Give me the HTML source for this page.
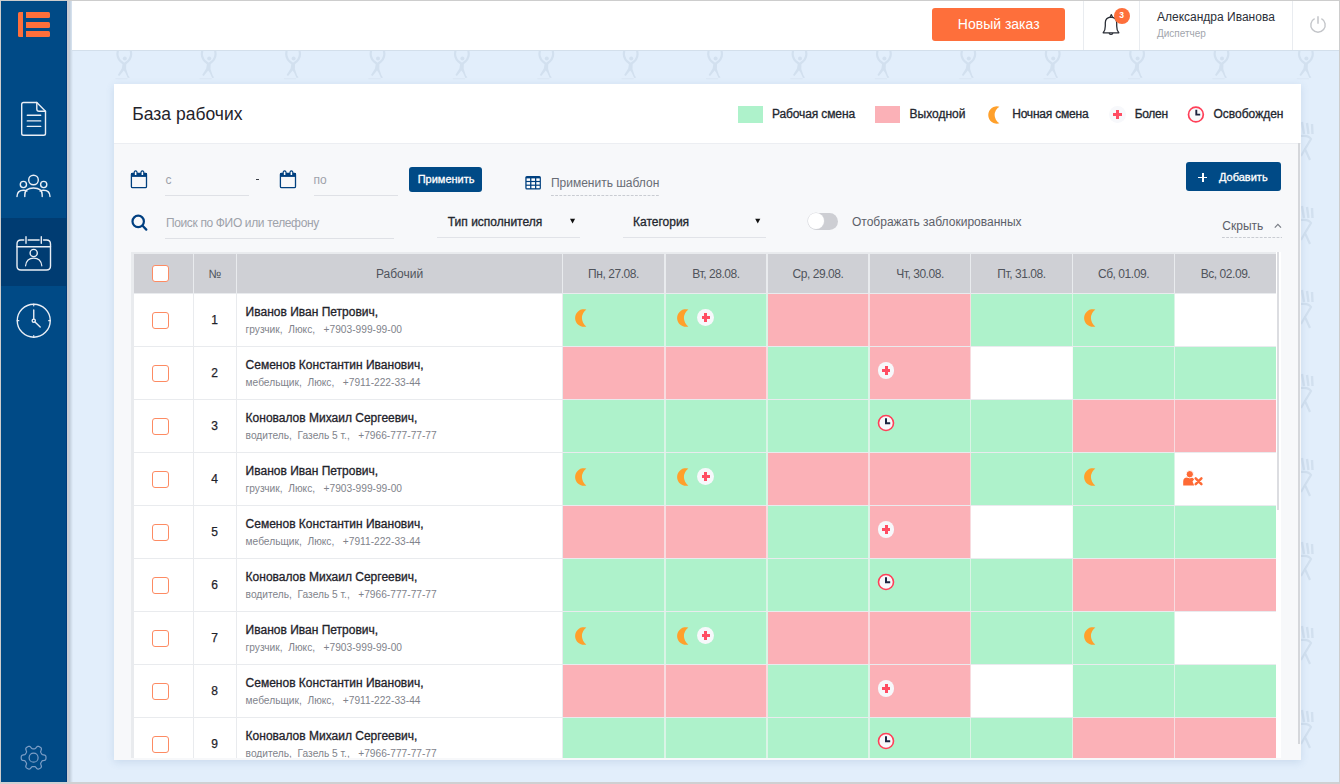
<!DOCTYPE html>
<html><head><meta charset="utf-8"><style>
*{margin:0;padding:0;box-sizing:border-box;}
html,body{width:1340px;height:784px;overflow:hidden;background:#e2eefb;font-family:"Liberation Sans", sans-serif;}
.a{position:absolute;}
.t{position:absolute;white-space:nowrap;line-height:1;}
.m{-webkit-text-stroke:0.3px currentColor;}
.m2{-webkit-text-stroke:0.25px currentColor;}
.cb{position:absolute;width:17px;height:17px;border:1.5px solid #fd8b63;border-radius:3px;background:#fff;}
</style></head>
<body>
<div class="a" style="left:0px;top:0px;width:67px;height:784px;background:#004a86;"></div>
<div class="a" style="left:66px;top:0px;width:1px;height:784px;background:#003b7a;"></div>
<div class="a" style="left:67px;top:0px;width:2px;height:784px;background:#c9ccd3;"></div>
<div class="a" style="left:69px;top:0px;width:4px;height:784px;background:linear-gradient(to right,#bcc8d5,#e2eefb);"></div>
<div class="a" style="left:17.5px;top:12px;width:5.5px;height:25px;background:#fe6f3b;border-radius:1.5px 0 0 1.5px"></div>
<div class="a" style="left:25.5px;top:12px;width:24.5px;height:6px;background:#fe6f3b;border-radius:0 1.5px 1.5px 0"></div>
<div class="a" style="left:25.5px;top:21.5px;width:24.5px;height:6px;background:#fe6f3b;border-radius:0 1.5px 1.5px 0"></div>
<div class="a" style="left:25.5px;top:31px;width:24.5px;height:6px;background:#fe6f3b;border-radius:0 1.5px 1.5px 0"></div>
<div class="a" style="left:1px;top:218px;width:66px;height:67.5px;background:#003c72;"></div>
<svg class="a" style="left:0;top:0" width="67" height="784" viewBox="0 0 67 784">
<g fill="none" stroke="#e9eef5" stroke-width="1.4" stroke-linecap="round" stroke-linejoin="round">
<path d="M23.5 102.5 H36.8 L45.5 111.2 V133.5 Q45.5 135.3 43.7 135.3 H23.5 Q21.7 135.3 21.7 133.5 V104.3 Q21.7 102.5 23.5 102.5 Z"/>
<path d="M36.8 102.5 V109 Q36.8 111.2 39 111.2 H45.5"/>
<path d="M27.3 115.3 H40.7 M27.3 120.9 H40.7 M27.3 126.4 H40.7"/>
<circle cx="33.5" cy="180" r="4.8"/>
<circle cx="23.4" cy="184.5" r="3.1"/>
<circle cx="43.7" cy="184.5" r="3.1"/>
<path d="M24.8 196.5 V195 Q24.8 188 33.5 188 Q42.2 188 42.2 195 V196.5"/>
<path d="M17 196.5 Q17 190.2 23.5 190.2 Q25.5 190.2 27 191"/>
<path d="M50 196.5 Q50 190.2 43.5 190.2 Q41.5 190.2 40 191"/>
<path d="M23.8 240 H21 Q17 240 17 244 V266 Q17 270 21 270 H46.5 Q50.5 270 50.5 266 V244 Q50.5 240 46.5 240 H43.5 M39.1 240 H28.2"/>
<path d="M17 246.7 H50.5"/>
<path d="M26 236.8 V243.2 M41.3 236.8 V243.2"/>
<circle cx="33.7" cy="253" r="3.6"/>
<path d="M25.6 265.8 Q26.5 258.2 33.7 258.2 Q40.9 258.2 41.8 265.8" stroke-width="1.2"/>
<circle cx="33.75" cy="320.7" r="16.5"/>
<path d="M33.75 310 V319 M35 322 L40.2 327"/>
<circle cx="33.75" cy="320.7" r="1.6"/>
<path d="M33.75 304.2 V305.8 M33.75 335.6 V337.2 M17.25 320.7 H18.8 M48.7 320.7 H50.25" stroke-width="1.2"/>
</g>
<g fill="none" stroke="#7c9ec6" stroke-width="1.2" stroke-linejoin="round">
<path d="M46.00 757.70 L45.99 758.02 L45.97 758.35 L45.94 758.67 L45.88 758.99 L45.79 759.30 L45.64 759.61 L45.41 759.89 L45.05 760.13 L44.53 760.32 L43.89 760.46 L43.24 760.56 L42.72 760.66 L42.35 760.80 L42.10 760.96 L41.92 761.15 L41.78 761.34 L41.66 761.54 L41.54 761.75 L41.42 761.95 L41.31 762.15 L41.19 762.35 L41.07 762.55 L40.96 762.76 L40.85 762.96 L40.75 763.18 L40.68 763.43 L40.66 763.73 L40.73 764.12 L40.89 764.62 L41.13 765.23 L41.34 765.86 L41.44 766.40 L41.40 766.84 L41.27 767.18 L41.08 767.45 L40.86 767.69 L40.61 767.90 L40.35 768.09 L40.08 768.27 L39.80 768.44 L39.52 768.60 L39.22 768.74 L38.93 768.87 L38.62 768.98 L38.30 769.05 L37.97 769.08 L37.61 769.03 L37.22 768.84 L36.79 768.48 L36.36 767.99 L35.95 767.48 L35.59 767.08 L35.29 766.83 L35.02 766.70 L34.78 766.63 L34.54 766.61 L34.30 766.60 L34.07 766.60 L33.83 766.60 L33.60 766.60 L33.37 766.60 L33.13 766.60 L32.90 766.60 L32.66 766.61 L32.42 766.63 L32.18 766.70 L31.91 766.83 L31.61 767.08 L31.25 767.48 L30.84 767.99 L30.41 768.48 L29.98 768.84 L29.59 769.03 L29.23 769.08 L28.90 769.05 L28.58 768.98 L28.27 768.87 L27.98 768.74 L27.68 768.60 L27.40 768.44 L27.12 768.27 L26.85 768.09 L26.59 767.90 L26.34 767.69 L26.12 767.45 L25.93 767.18 L25.80 766.84 L25.76 766.40 L25.86 765.86 L26.07 765.23 L26.31 764.62 L26.47 764.12 L26.54 763.73 L26.52 763.43 L26.45 763.18 L26.35 762.96 L26.24 762.76 L26.13 762.55 L26.01 762.35 L25.89 762.15 L25.78 761.95 L25.66 761.75 L25.54 761.54 L25.42 761.34 L25.28 761.15 L25.10 760.96 L24.85 760.80 L24.48 760.66 L23.96 760.56 L23.31 760.46 L22.67 760.32 L22.15 760.13 L21.79 759.89 L21.56 759.61 L21.41 759.30 L21.32 758.99 L21.26 758.67 L21.23 758.35 L21.21 758.02 L21.20 757.70 L21.21 757.38 L21.23 757.05 L21.26 756.73 L21.32 756.41 L21.41 756.10 L21.56 755.79 L21.79 755.51 L22.15 755.27 L22.67 755.08 L23.31 754.94 L23.96 754.84 L24.48 754.74 L24.85 754.60 L25.10 754.44 L25.28 754.25 L25.42 754.06 L25.54 753.86 L25.66 753.65 L25.78 753.45 L25.89 753.25 L26.01 753.05 L26.13 752.85 L26.24 752.64 L26.35 752.44 L26.45 752.22 L26.52 751.97 L26.54 751.67 L26.47 751.28 L26.31 750.78 L26.07 750.17 L25.86 749.54 L25.76 749.00 L25.80 748.56 L25.93 748.22 L26.12 747.95 L26.34 747.71 L26.59 747.50 L26.85 747.31 L27.12 747.13 L27.40 746.96 L27.68 746.80 L27.98 746.66 L28.27 746.53 L28.58 746.42 L28.90 746.35 L29.23 746.32 L29.59 746.37 L29.98 746.56 L30.41 746.92 L30.84 747.41 L31.25 747.92 L31.61 748.32 L31.91 748.57 L32.18 748.70 L32.42 748.77 L32.66 748.79 L32.90 748.80 L33.13 748.80 L33.37 748.80 L33.60 748.80 L33.83 748.80 L34.07 748.80 L34.30 748.80 L34.54 748.79 L34.78 748.77 L35.02 748.70 L35.29 748.57 L35.59 748.32 L35.95 747.92 L36.36 747.41 L36.79 746.92 L37.22 746.56 L37.61 746.37 L37.97 746.32 L38.30 746.35 L38.62 746.42 L38.93 746.53 L39.22 746.66 L39.52 746.80 L39.80 746.96 L40.08 747.13 L40.35 747.31 L40.61 747.50 L40.86 747.71 L41.08 747.95 L41.27 748.22 L41.40 748.56 L41.44 749.00 L41.34 749.54 L41.13 750.17 L40.89 750.78 L40.73 751.28 L40.66 751.67 L40.68 751.97 L40.75 752.22 L40.85 752.44 L40.96 752.64 L41.07 752.85 L41.19 753.05 L41.31 753.25 L41.42 753.45 L41.54 753.65 L41.66 753.86 L41.78 754.06 L41.92 754.25 L42.10 754.44 L42.35 754.60 L42.72 754.74 L43.24 754.84 L43.89 754.94 L44.53 755.08 L45.05 755.27 L45.41 755.51 L45.64 755.79 L45.79 756.10 L45.88 756.41 L45.94 756.73 L45.97 757.05 L45.99 757.38 Z"/>
<circle cx="33.6" cy="757.7" r="4.5"/>
</g>
</svg>
<svg class="a" style="left:0;top:0;filter:blur(0.5px)" width="1340" height="784" viewBox="0 0 1340 784"><g transform="translate(124.3,50)">
<path d="M-6.5 1 Q-8 7 -3.5 11.5 L-1.5 13 M6.5 1 Q8 7 3.5 11.5 L1.5 13" stroke="#d2e0ef" stroke-width="2.2" fill="none" stroke-linecap="round"/>
<path d="M-7 0.5 Q0 -1.5 7.5 0.5" stroke="#d2e0ef" stroke-width="1.6" fill="none"/>
<circle cx="0.5" cy="8.5" r="2" fill="#d2e0ef"/>
<path d="M-1.5 12.5 L2 12.5 L1.8 19 L4 25.5 L5.5 27.5 L3.5 28 L1 22.5 L-0.5 20.5 L-5 26 L-6.5 25 L-2.5 18.5 Z" fill="#d2e0ef"/>
<path d="M-9 28.7 H3" stroke="#d8e4f1" stroke-width="0.8"/>
</g><g transform="translate(208.7,50)">
<path d="M-6.5 1 Q-8 7 -3.5 11.5 L-1.5 13 M6.5 1 Q8 7 3.5 11.5 L1.5 13" stroke="#d2e0ef" stroke-width="2.2" fill="none" stroke-linecap="round"/>
<path d="M-7 0.5 Q0 -1.5 7.5 0.5" stroke="#d2e0ef" stroke-width="1.6" fill="none"/>
<circle cx="0.5" cy="8.5" r="2" fill="#d2e0ef"/>
<path d="M-1.5 12.5 L2 12.5 L1.8 19 L4 25.5 L5.5 27.5 L3.5 28 L1 22.5 L-0.5 20.5 L-5 26 L-6.5 25 L-2.5 18.5 Z" fill="#d2e0ef"/>
<path d="M-9 28.7 H3" stroke="#d8e4f1" stroke-width="0.8"/>
</g><g transform="translate(293.1,50)">
<path d="M-6.5 1 Q-8 7 -3.5 11.5 L-1.5 13 M6.5 1 Q8 7 3.5 11.5 L1.5 13" stroke="#d2e0ef" stroke-width="2.2" fill="none" stroke-linecap="round"/>
<path d="M-7 0.5 Q0 -1.5 7.5 0.5" stroke="#d2e0ef" stroke-width="1.6" fill="none"/>
<circle cx="0.5" cy="8.5" r="2" fill="#d2e0ef"/>
<path d="M-1.5 12.5 L2 12.5 L1.8 19 L4 25.5 L5.5 27.5 L3.5 28 L1 22.5 L-0.5 20.5 L-5 26 L-6.5 25 L-2.5 18.5 Z" fill="#d2e0ef"/>
<path d="M-9 28.7 H3" stroke="#d8e4f1" stroke-width="0.8"/>
</g><g transform="translate(377.5,50)">
<path d="M-6.5 1 Q-8 7 -3.5 11.5 L-1.5 13 M6.5 1 Q8 7 3.5 11.5 L1.5 13" stroke="#d2e0ef" stroke-width="2.2" fill="none" stroke-linecap="round"/>
<path d="M-7 0.5 Q0 -1.5 7.5 0.5" stroke="#d2e0ef" stroke-width="1.6" fill="none"/>
<circle cx="0.5" cy="8.5" r="2" fill="#d2e0ef"/>
<path d="M-1.5 12.5 L2 12.5 L1.8 19 L4 25.5 L5.5 27.5 L3.5 28 L1 22.5 L-0.5 20.5 L-5 26 L-6.5 25 L-2.5 18.5 Z" fill="#d2e0ef"/>
<path d="M-9 28.7 H3" stroke="#d8e4f1" stroke-width="0.8"/>
</g><g transform="translate(461.9,50)">
<path d="M-6.5 1 Q-8 7 -3.5 11.5 L-1.5 13 M6.5 1 Q8 7 3.5 11.5 L1.5 13" stroke="#d2e0ef" stroke-width="2.2" fill="none" stroke-linecap="round"/>
<path d="M-7 0.5 Q0 -1.5 7.5 0.5" stroke="#d2e0ef" stroke-width="1.6" fill="none"/>
<circle cx="0.5" cy="8.5" r="2" fill="#d2e0ef"/>
<path d="M-1.5 12.5 L2 12.5 L1.8 19 L4 25.5 L5.5 27.5 L3.5 28 L1 22.5 L-0.5 20.5 L-5 26 L-6.5 25 L-2.5 18.5 Z" fill="#d2e0ef"/>
<path d="M-9 28.7 H3" stroke="#d8e4f1" stroke-width="0.8"/>
</g><g transform="translate(546.3,50)">
<path d="M-6.5 1 Q-8 7 -3.5 11.5 L-1.5 13 M6.5 1 Q8 7 3.5 11.5 L1.5 13" stroke="#d2e0ef" stroke-width="2.2" fill="none" stroke-linecap="round"/>
<path d="M-7 0.5 Q0 -1.5 7.5 0.5" stroke="#d2e0ef" stroke-width="1.6" fill="none"/>
<circle cx="0.5" cy="8.5" r="2" fill="#d2e0ef"/>
<path d="M-1.5 12.5 L2 12.5 L1.8 19 L4 25.5 L5.5 27.5 L3.5 28 L1 22.5 L-0.5 20.5 L-5 26 L-6.5 25 L-2.5 18.5 Z" fill="#d2e0ef"/>
<path d="M-9 28.7 H3" stroke="#d8e4f1" stroke-width="0.8"/>
</g><g transform="translate(630.7,50)">
<path d="M-6.5 1 Q-8 7 -3.5 11.5 L-1.5 13 M6.5 1 Q8 7 3.5 11.5 L1.5 13" stroke="#d2e0ef" stroke-width="2.2" fill="none" stroke-linecap="round"/>
<path d="M-7 0.5 Q0 -1.5 7.5 0.5" stroke="#d2e0ef" stroke-width="1.6" fill="none"/>
<circle cx="0.5" cy="8.5" r="2" fill="#d2e0ef"/>
<path d="M-1.5 12.5 L2 12.5 L1.8 19 L4 25.5 L5.5 27.5 L3.5 28 L1 22.5 L-0.5 20.5 L-5 26 L-6.5 25 L-2.5 18.5 Z" fill="#d2e0ef"/>
<path d="M-9 28.7 H3" stroke="#d8e4f1" stroke-width="0.8"/>
</g><g transform="translate(715.1,50)">
<path d="M-6.5 1 Q-8 7 -3.5 11.5 L-1.5 13 M6.5 1 Q8 7 3.5 11.5 L1.5 13" stroke="#d2e0ef" stroke-width="2.2" fill="none" stroke-linecap="round"/>
<path d="M-7 0.5 Q0 -1.5 7.5 0.5" stroke="#d2e0ef" stroke-width="1.6" fill="none"/>
<circle cx="0.5" cy="8.5" r="2" fill="#d2e0ef"/>
<path d="M-1.5 12.5 L2 12.5 L1.8 19 L4 25.5 L5.5 27.5 L3.5 28 L1 22.5 L-0.5 20.5 L-5 26 L-6.5 25 L-2.5 18.5 Z" fill="#d2e0ef"/>
<path d="M-9 28.7 H3" stroke="#d8e4f1" stroke-width="0.8"/>
</g><g transform="translate(799.5,50)">
<path d="M-6.5 1 Q-8 7 -3.5 11.5 L-1.5 13 M6.5 1 Q8 7 3.5 11.5 L1.5 13" stroke="#d2e0ef" stroke-width="2.2" fill="none" stroke-linecap="round"/>
<path d="M-7 0.5 Q0 -1.5 7.5 0.5" stroke="#d2e0ef" stroke-width="1.6" fill="none"/>
<circle cx="0.5" cy="8.5" r="2" fill="#d2e0ef"/>
<path d="M-1.5 12.5 L2 12.5 L1.8 19 L4 25.5 L5.5 27.5 L3.5 28 L1 22.5 L-0.5 20.5 L-5 26 L-6.5 25 L-2.5 18.5 Z" fill="#d2e0ef"/>
<path d="M-9 28.7 H3" stroke="#d8e4f1" stroke-width="0.8"/>
</g><g transform="translate(883.9,50)">
<path d="M-6.5 1 Q-8 7 -3.5 11.5 L-1.5 13 M6.5 1 Q8 7 3.5 11.5 L1.5 13" stroke="#d2e0ef" stroke-width="2.2" fill="none" stroke-linecap="round"/>
<path d="M-7 0.5 Q0 -1.5 7.5 0.5" stroke="#d2e0ef" stroke-width="1.6" fill="none"/>
<circle cx="0.5" cy="8.5" r="2" fill="#d2e0ef"/>
<path d="M-1.5 12.5 L2 12.5 L1.8 19 L4 25.5 L5.5 27.5 L3.5 28 L1 22.5 L-0.5 20.5 L-5 26 L-6.5 25 L-2.5 18.5 Z" fill="#d2e0ef"/>
<path d="M-9 28.7 H3" stroke="#d8e4f1" stroke-width="0.8"/>
</g><g transform="translate(968.3,50)">
<path d="M-6.5 1 Q-8 7 -3.5 11.5 L-1.5 13 M6.5 1 Q8 7 3.5 11.5 L1.5 13" stroke="#d2e0ef" stroke-width="2.2" fill="none" stroke-linecap="round"/>
<path d="M-7 0.5 Q0 -1.5 7.5 0.5" stroke="#d2e0ef" stroke-width="1.6" fill="none"/>
<circle cx="0.5" cy="8.5" r="2" fill="#d2e0ef"/>
<path d="M-1.5 12.5 L2 12.5 L1.8 19 L4 25.5 L5.5 27.5 L3.5 28 L1 22.5 L-0.5 20.5 L-5 26 L-6.5 25 L-2.5 18.5 Z" fill="#d2e0ef"/>
<path d="M-9 28.7 H3" stroke="#d8e4f1" stroke-width="0.8"/>
</g><g transform="translate(1052.7,50)">
<path d="M-6.5 1 Q-8 7 -3.5 11.5 L-1.5 13 M6.5 1 Q8 7 3.5 11.5 L1.5 13" stroke="#d2e0ef" stroke-width="2.2" fill="none" stroke-linecap="round"/>
<path d="M-7 0.5 Q0 -1.5 7.5 0.5" stroke="#d2e0ef" stroke-width="1.6" fill="none"/>
<circle cx="0.5" cy="8.5" r="2" fill="#d2e0ef"/>
<path d="M-1.5 12.5 L2 12.5 L1.8 19 L4 25.5 L5.5 27.5 L3.5 28 L1 22.5 L-0.5 20.5 L-5 26 L-6.5 25 L-2.5 18.5 Z" fill="#d2e0ef"/>
<path d="M-9 28.7 H3" stroke="#d8e4f1" stroke-width="0.8"/>
</g><g transform="translate(1137.1,50)">
<path d="M-6.5 1 Q-8 7 -3.5 11.5 L-1.5 13 M6.5 1 Q8 7 3.5 11.5 L1.5 13" stroke="#d2e0ef" stroke-width="2.2" fill="none" stroke-linecap="round"/>
<path d="M-7 0.5 Q0 -1.5 7.5 0.5" stroke="#d2e0ef" stroke-width="1.6" fill="none"/>
<circle cx="0.5" cy="8.5" r="2" fill="#d2e0ef"/>
<path d="M-1.5 12.5 L2 12.5 L1.8 19 L4 25.5 L5.5 27.5 L3.5 28 L1 22.5 L-0.5 20.5 L-5 26 L-6.5 25 L-2.5 18.5 Z" fill="#d2e0ef"/>
<path d="M-9 28.7 H3" stroke="#d8e4f1" stroke-width="0.8"/>
</g><g transform="translate(1221.5,50)">
<path d="M-6.5 1 Q-8 7 -3.5 11.5 L-1.5 13 M6.5 1 Q8 7 3.5 11.5 L1.5 13" stroke="#d2e0ef" stroke-width="2.2" fill="none" stroke-linecap="round"/>
<path d="M-7 0.5 Q0 -1.5 7.5 0.5" stroke="#d2e0ef" stroke-width="1.6" fill="none"/>
<circle cx="0.5" cy="8.5" r="2" fill="#d2e0ef"/>
<path d="M-1.5 12.5 L2 12.5 L1.8 19 L4 25.5 L5.5 27.5 L3.5 28 L1 22.5 L-0.5 20.5 L-5 26 L-6.5 25 L-2.5 18.5 Z" fill="#d2e0ef"/>
<path d="M-9 28.7 H3" stroke="#d8e4f1" stroke-width="0.8"/>
</g><g transform="translate(1305.9,50)">
<path d="M-6.5 1 Q-8 7 -3.5 11.5 L-1.5 13 M6.5 1 Q8 7 3.5 11.5 L1.5 13" stroke="#d2e0ef" stroke-width="2.2" fill="none" stroke-linecap="round"/>
<path d="M-7 0.5 Q0 -1.5 7.5 0.5" stroke="#d2e0ef" stroke-width="1.6" fill="none"/>
<circle cx="0.5" cy="8.5" r="2" fill="#d2e0ef"/>
<path d="M-1.5 12.5 L2 12.5 L1.8 19 L4 25.5 L5.5 27.5 L3.5 28 L1 22.5 L-0.5 20.5 L-5 26 L-6.5 25 L-2.5 18.5 Z" fill="#d2e0ef"/>
<path d="M-9 28.7 H3" stroke="#d8e4f1" stroke-width="0.8"/>
</g><g transform="translate(1300,122)">
<path d="M2 0 L4 12 M7 1 L8.5 12 M12 2 L12.5 12" stroke="#d2e0ef" stroke-width="2.4" fill="none"/>
<path d="M1 14 Q9 13 11 17 L5 27 L10 38 M5 27 L1 34" stroke="#d2e0ef" stroke-width="2.2" fill="none"/>
</g><g transform="translate(1300,206)">
<path d="M2 0 L4 12 M7 1 L8.5 12 M12 2 L12.5 12" stroke="#d2e0ef" stroke-width="2.4" fill="none"/>
<path d="M1 14 Q9 13 11 17 L5 27 L10 38 M5 27 L1 34" stroke="#d2e0ef" stroke-width="2.2" fill="none"/>
</g><g transform="translate(1300,290)">
<path d="M2 0 L4 12 M7 1 L8.5 12 M12 2 L12.5 12" stroke="#d2e0ef" stroke-width="2.4" fill="none"/>
<path d="M1 14 Q9 13 11 17 L5 27 L10 38 M5 27 L1 34" stroke="#d2e0ef" stroke-width="2.2" fill="none"/>
</g><g transform="translate(1300,374)">
<path d="M2 0 L4 12 M7 1 L8.5 12 M12 2 L12.5 12" stroke="#d2e0ef" stroke-width="2.4" fill="none"/>
<path d="M1 14 Q9 13 11 17 L5 27 L10 38 M5 27 L1 34" stroke="#d2e0ef" stroke-width="2.2" fill="none"/>
</g><g transform="translate(1300,458)">
<path d="M2 0 L4 12 M7 1 L8.5 12 M12 2 L12.5 12" stroke="#d2e0ef" stroke-width="2.4" fill="none"/>
<path d="M1 14 Q9 13 11 17 L5 27 L10 38 M5 27 L1 34" stroke="#d2e0ef" stroke-width="2.2" fill="none"/>
</g><g transform="translate(1300,542)">
<path d="M2 0 L4 12 M7 1 L8.5 12 M12 2 L12.5 12" stroke="#d2e0ef" stroke-width="2.4" fill="none"/>
<path d="M1 14 Q9 13 11 17 L5 27 L10 38 M5 27 L1 34" stroke="#d2e0ef" stroke-width="2.2" fill="none"/>
</g><g transform="translate(1300,626)">
<path d="M2 0 L4 12 M7 1 L8.5 12 M12 2 L12.5 12" stroke="#d2e0ef" stroke-width="2.4" fill="none"/>
<path d="M1 14 Q9 13 11 17 L5 27 L10 38 M5 27 L1 34" stroke="#d2e0ef" stroke-width="2.2" fill="none"/>
</g><g transform="translate(1300,710)">
<path d="M2 0 L4 12 M7 1 L8.5 12 M12 2 L12.5 12" stroke="#d2e0ef" stroke-width="2.4" fill="none"/>
<path d="M1 14 Q9 13 11 17 L5 27 L10 38 M5 27 L1 34" stroke="#d2e0ef" stroke-width="2.2" fill="none"/>
</g></svg>
<div class="a" style="left:72px;top:0px;width:1268px;height:50px;background:#fff;"></div>
<div class="a" style="left:72px;top:49.5px;width:1268px;height:1.5px;background:#d3dfeb;"></div>
<div class="a" style="left:932px;top:8px;width:133px;height:33px;background:#fe6f3b;border-radius:3px"></div>
<div class="t " style="left:957.8px;top:17.45px;font-size:14px;color:#fff;font-weight:400;letter-spacing:0px;">Новый заказ</div>
<div class="a" style="left:1083px;top:0px;width:1px;height:50px;background:#e9ecf0;"></div>
<div class="a" style="left:1139px;top:0px;width:1px;height:50px;background:#e9ecf0;"></div>
<div class="a" style="left:1292px;top:0px;width:1px;height:50px;background:#e9ecf0;"></div>
<svg class="a" style="left:1095px;top:8px" width="30" height="30" viewBox="1095 8 30 30">
<path d="M1103.2 32.8 Q1105.3 30.6 1105.3 26 V22.8 Q1105.3 17.6 1111 17.2 Q1116.7 17.6 1116.7 22.8 V26 Q1116.7 30.6 1118.8 32.8 Z" fill="none" stroke="#2a2e36" stroke-width="1.3" stroke-linejoin="round"/>
<path d="M1109.9 17.4 L1111.3 14.6 L1112.7 17.4" fill="none" stroke="#2a2e36" stroke-width="1.2" stroke-linejoin="round"/>
<path d="M1109 33.2 Q1111 35.5 1113 33.2" fill="none" stroke="#2a2e36" stroke-width="1.3"/>
</svg>
<div class="a" style="left:1113.8px;top:7.9px;width:16.2px;height:16.2px;background:#fe6f3b;border-radius:50%"></div>
<div class="t " style="left:1111.6px;width:20px;text-align:center;top:11.40px;font-size:8.5px;color:#fff;font-weight:700;letter-spacing:0px;">3</div>
<div class="t " style="left:1157px;top:11.04px;font-size:12px;color:#2b2f38;font-weight:400;letter-spacing:0px;">Александра Иванова</div>
<div class="t " style="left:1157px;top:29.43px;font-size:10px;color:#a2a6ad;font-weight:400;letter-spacing:0px;">Диспетчер</div>
<svg class="a" style="left:1305px;top:10px" width="30" height="30" viewBox="1305 10 30 30">
<path d="M1314.6 18.65 A7.2 7.2 0 1 0 1321.4 18.65" fill="none" stroke="#c3c5c9" stroke-width="1.4"/>
<path d="M1318 16.2 V23.7" stroke="#c3c5c9" stroke-width="1.5"/>
</svg>
<div class="a" style="left:114px;top:84px;width:1187px;height:676px;background:#f7f8fa;box-shadow:0 2px 8px rgba(70,110,160,0.16)"></div>
<div class="a" style="left:114px;top:84px;width:1187px;height:59px;background:#fff;"></div>
<div class="a" style="left:114px;top:142.5px;width:1187px;height:1px;background:#eceef2;"></div>
<div class="t " style="left:132.3px;top:106.39px;font-size:17.5px;color:#1f232b;font-weight:400;letter-spacing:0px;">База рабочих</div>
<div class="a" style="left:738px;top:106px;width:25px;height:17px;background:#aef2cb;"></div>
<div class="t m" style="left:772px;top:107.74px;font-size:12px;color:#23272f;font-weight:400;letter-spacing:-0.12px;">Рабочая смена</div>
<div class="a" style="left:875px;top:106px;width:25px;height:17px;background:#fbb1b7;"></div>
<div class="t m" style="left:909.5px;top:107.74px;font-size:12px;color:#23272f;font-weight:400;letter-spacing:0px;">Выходной</div>
<div class="t m" style="left:1012.2px;top:107.74px;font-size:12px;color:#23272f;font-weight:400;letter-spacing:-0.2px;">Ночная смена</div>
<div class="t m" style="left:1134.7px;top:107.74px;font-size:12px;color:#23272f;font-weight:400;letter-spacing:-0.3px;">Болен</div>
<div class="t m" style="left:1213.5px;top:107.74px;font-size:12px;color:#23272f;font-weight:400;letter-spacing:0px;">Освобожден</div>
<svg class="a" style="left:129.3px;top:168px" width="20" height="22" viewBox="129.3 168 20 22">
<path d="M132.5 173.3 H146.0 Q146.8 173.3 146.8 174.5 V186.5 Q146.8 187.7 145.60000000000002 187.7 H132.9 Q131.70000000000002 187.7 131.70000000000002 186.5 V174.5 Q131.70000000000002 173.3 132.5 173.3 Z" fill="none" stroke="#00407f" stroke-width="1.3"/>
<rect x="131.3" y="173" width="16" height="3.9" fill="#00407f"/>
<path d="M134.5 175 V172 Q135.9 169.8 137.3 172 V175 M141.3 175 V172 Q142.70000000000002 169.8 144.10000000000002 172 V175" fill="#fff" stroke="#00407f" stroke-width="1.2"/>
</svg>
<svg class="a" style="left:277.5px;top:168px" width="20" height="22" viewBox="277.5 168 20 22">
<path d="M280.7 173.3 H294.2 Q295.0 173.3 295.0 174.5 V186.5 Q295.0 187.7 293.8 187.7 H281.1 Q279.9 187.7 279.9 186.5 V174.5 Q279.9 173.3 280.7 173.3 Z" fill="none" stroke="#00407f" stroke-width="1.3"/>
<rect x="279.5" y="173" width="16" height="3.9" fill="#00407f"/>
<path d="M282.7 175 V172 Q284.1 169.8 285.5 172 V175 M289.5 175 V172 Q290.9 169.8 292.3 172 V175" fill="#fff" stroke="#00407f" stroke-width="1.2"/>
</svg>
<div class="t " style="left:165.4px;top:173.54px;font-size:12px;color:#9ea2aa;font-weight:400;letter-spacing:0px;">с</div>
<div class="a" style="left:165px;top:195px;width:84px;height:1px;background:#dfe1e6;"></div>
<div class="a" style="left:256px;top:179px;width:3px;height:1.3px;background:#3a3e46;"></div>
<div class="t " style="left:313.5px;top:173.54px;font-size:12px;color:#9ea2aa;font-weight:400;letter-spacing:0px;">по</div>
<div class="a" style="left:313.5px;top:194.5px;width:84px;height:1px;background:#dfe1e6;"></div>
<div class="a" style="left:408.8px;top:167px;width:73.6px;height:25px;background:#004a86;border-radius:3px"></div>
<div class="t m" style="left:417.7px;top:174.29px;font-size:11px;color:#fff;font-weight:400;letter-spacing:0px;">Применить</div>
<svg class="a" style="left:523px;top:174px" width="20" height="18" viewBox="523 174 20 18"><rect x="525.3" y="176" width="15.6" height="13.6" rx="1.5" fill="#00407f"/><rect x="526.6" y="178.4" width="3.5" height="2.5" fill="#fff"/><rect x="526.6" y="182.1" width="3.5" height="2.5" fill="#fff"/><rect x="526.6" y="185.8" width="3.5" height="2.4" fill="#fff"/><rect x="531.4" y="178.4" width="3.6" height="2.5" fill="#fff"/><rect x="531.4" y="182.1" width="3.6" height="2.5" fill="#fff"/><rect x="531.4" y="185.8" width="3.6" height="2.4" fill="#fff"/><rect x="536.3" y="178.4" width="3.4" height="2.5" fill="#fff"/><rect x="536.3" y="182.1" width="3.4" height="2.5" fill="#fff"/><rect x="536.3" y="185.8" width="3.4" height="2.4" fill="#fff"/></svg>
<div class="t " style="left:550.9px;top:177.14px;font-size:12px;color:#686c75;font-weight:400;letter-spacing:0px;">Применить шаблон</div>
<svg class="a" style="left:551px;top:195px" width="108" height="1" viewBox="551 195 108 1"><line x1="551" y1="195.5" x2="659" y2="195.5" stroke="#c9ccd2" stroke-width="1" stroke-dasharray="2.8 1.4"/></svg>
<div class="a" style="left:1186px;top:162px;width:95px;height:29px;background:#004a86;border-radius:3px"></div>
<div class="a" style="left:1198.3px;top:176.5px;width:9px;height:1.8px;background:#fff;"></div>
<div class="a" style="left:1201.9px;top:172.8px;width:1.8px;height:9px;background:#fff;"></div>
<div class="t m" style="left:1219px;top:171.69px;font-size:11px;color:#fff;font-weight:400;letter-spacing:0px;">Добавить</div>
<svg class="a" style="left:128px;top:211px" width="22" height="22" viewBox="128 211 22 22">
<circle cx="138.2" cy="221.4" r="5.7" fill="none" stroke="#003f80" stroke-width="2.2"/>
<path d="M142.6 225.8 L146.3 229.6" stroke="#003f80" stroke-width="2.3" stroke-linecap="round"/>
</svg>
<div class="t " style="left:165.9px;top:217.14px;font-size:12px;color:#9ea2aa;font-weight:400;letter-spacing:-0.35px;">Поиск по ФИО или телефону</div>
<div class="a" style="left:165px;top:237.5px;width:229px;height:1px;background:#dfe1e6;"></div>
<div class="t m" style="left:447.8px;top:216.34px;font-size:12px;color:#23272f;font-weight:400;letter-spacing:0px;">Тип исполнителя</div>
<svg class="a" style="left:569px;top:218px" width="7" height="6" viewBox="569 218 7 6"><path d="M570 218.8 H575.1 L572.55 223.4 Z" fill="#111"/></svg>
<div class="a" style="left:437.3px;top:237px;width:143px;height:1px;background:#e1e3e8;"></div>
<div class="t m" style="left:633px;top:216.34px;font-size:12px;color:#23272f;font-weight:400;letter-spacing:0px;">Категория</div>
<svg class="a" style="left:754px;top:218px" width="7" height="6" viewBox="754 218 7 6"><path d="M755.2 218.8 H760.3 L757.75 223.4 Z" fill="#111"/></svg>
<div class="a" style="left:622.7px;top:237px;width:143px;height:1px;background:#e1e3e8;"></div>
<div class="a" style="left:807.6px;top:213px;width:30.1px;height:16.8px;background:#cdced3;border-radius:9px"></div>
<div class="a" style="left:807.6px;top:213.4px;width:16px;height:16px;background:#fff;border-radius:50%;box-shadow:0 0 0 0.6px #d6d7dc"></div>
<div class="t " style="left:852px;top:215.84px;font-size:12px;color:#5c6069;font-weight:400;letter-spacing:0px;">Отображать заблокированных</div>
<div class="t " style="left:1222.3px;top:219.84px;font-size:12px;color:#5c6069;font-weight:400;letter-spacing:0px;">Скрыть</div>
<svg class="a" style="left:1272px;top:221px" width="11" height="8" viewBox="1272 221 11 8"><path d="M1274.8 227.6 L1277.9 224.3 L1281 227.6" fill="none" stroke="#7a7e86" stroke-width="1.2"/></svg>
<svg class="a" style="left:1222px;top:237px" width="60" height="1" viewBox="1222 237 60 1"><line x1="1222" y1="237.5" x2="1282" y2="237.5" stroke="#c9ccd2" stroke-width="1" stroke-dasharray="2.8 1.4"/></svg>
<div class="a" style="left:131px;top:252px;width:1149px;height:506px;background:#e9ebee;"></div>
<div class="a" style="left:1276px;top:252px;width:5px;height:506px;background:#fff;"></div>
<div class="a" style="left:1276.5px;top:252px;width:2.6px;height:257.5px;background:#dcdde1;"></div>
<div class="a" style="left:134px;top:254px;width:59px;height:39px;background:#cfd0d5;"></div>
<div class="a" style="left:194px;top:254px;width:42px;height:39px;background:#cfd0d5;"></div>
<div class="a" style="left:237px;top:254px;width:325px;height:39px;background:#cfd0d5;"></div>
<div class="a" style="left:563px;top:254px;width:101px;height:39px;background:#cfd0d5;"></div>
<div class="a" style="left:666px;top:254px;width:100px;height:39px;background:#cfd0d5;"></div>
<div class="a" style="left:768px;top:254px;width:100px;height:39px;background:#cfd0d5;"></div>
<div class="a" style="left:870px;top:254px;width:100px;height:39px;background:#cfd0d5;"></div>
<div class="a" style="left:971px;top:254px;width:101px;height:39px;background:#cfd0d5;"></div>
<div class="a" style="left:1073px;top:254px;width:101px;height:39px;background:#cfd0d5;"></div>
<div class="a" style="left:1175px;top:254px;width:101px;height:39px;background:#cfd0d5;"></div>
<div class="cb" style="left:152.3px;top:265px"></div>
<div class="t " style="left:194.9px;width:40px;text-align:center;top:267.64px;font-size:12px;color:#50545c;font-weight:400;letter-spacing:0px;">№</div>
<div class="t " style="left:299.5px;width:200px;text-align:center;top:267.64px;font-size:12px;color:#50545c;font-weight:400;letter-spacing:0px;">Рабочий</div>
<div class="t " style="left:563.5px;width:100px;text-align:center;top:267.64px;font-size:12px;color:#50545c;font-weight:400;letter-spacing:-0.45px;">Пн, 27.08.</div>
<div class="t " style="left:666.0px;width:100px;text-align:center;top:267.64px;font-size:12px;color:#50545c;font-weight:400;letter-spacing:-0.45px;">Вт, 28.08.</div>
<div class="t " style="left:768.0px;width:100px;text-align:center;top:267.64px;font-size:12px;color:#50545c;font-weight:400;letter-spacing:-0.45px;">Ср, 29.08.</div>
<div class="t " style="left:870.0px;width:100px;text-align:center;top:267.64px;font-size:12px;color:#50545c;font-weight:400;letter-spacing:-0.45px;">Чт, 30.08.</div>
<div class="t " style="left:971.5px;width:100px;text-align:center;top:267.64px;font-size:12px;color:#50545c;font-weight:400;letter-spacing:-0.45px;">Пт, 31.08.</div>
<div class="t " style="left:1073.5px;width:100px;text-align:center;top:267.64px;font-size:12px;color:#50545c;font-weight:400;letter-spacing:-0.45px;">Сб, 01.09.</div>
<div class="t " style="left:1175.5px;width:100px;text-align:center;top:267.64px;font-size:12px;color:#50545c;font-weight:400;letter-spacing:-0.45px;">Вс, 02.09.</div>
<div class="a" style="left:134px;top:294px;width:59px;height:52px;background:#fff;"></div>
<div class="a" style="left:194px;top:294px;width:42px;height:52px;background:#fff;"></div>
<div class="a" style="left:237px;top:294px;width:325px;height:52px;background:#fff;"></div>
<div class="a" style="left:563px;top:294px;width:103px;height:52px;background:#aef2cb;"></div>
<div class="a" style="left:664px;top:294px;width:2px;height:52px;background:rgba(245,245,247,0.62);"></div>
<div class="a" style="left:666px;top:294px;width:102px;height:52px;background:#aef2cb;"></div>
<div class="a" style="left:766px;top:294px;width:2px;height:52px;background:rgba(245,245,247,0.62);"></div>
<div class="a" style="left:768px;top:294px;width:102px;height:52px;background:#fbb1b7;"></div>
<div class="a" style="left:868px;top:294px;width:2px;height:52px;background:rgba(245,245,247,0.62);"></div>
<div class="a" style="left:870px;top:294px;width:101px;height:52px;background:#fbb1b7;"></div>
<div class="a" style="left:970px;top:294px;width:1px;height:52px;background:rgba(245,245,247,0.62);"></div>
<div class="a" style="left:971px;top:294px;width:102px;height:52px;background:#aef2cb;"></div>
<div class="a" style="left:1072px;top:294px;width:1px;height:52px;background:rgba(245,245,247,0.62);"></div>
<div class="a" style="left:1073px;top:294px;width:102px;height:52px;background:#aef2cb;"></div>
<div class="a" style="left:1174px;top:294px;width:1px;height:52px;background:rgba(245,245,247,0.62);"></div>
<div class="a" style="left:1175px;top:294px;width:101px;height:52px;background:#fff;"></div>
<div class="cb" style="left:152.3px;top:312px"></div>
<div class="t m2" style="left:199.5px;width:30px;text-align:center;top:314.44px;font-size:12px;color:#1f232b;font-weight:400;letter-spacing:0px;">1</div>
<div class="t m" style="left:245.6px;top:305.64px;font-size:12px;color:#1f232b;font-weight:400;letter-spacing:0px;">Иванов Иван Петрович,</div>
<div class="t " style="left:245.6px;top:324.77px;font-size:10.2px;color:#7f838b;font-weight:400;letter-spacing:0px;">грузчик,&nbsp; Люкс,&nbsp;&nbsp; +7903-999-99-00</div>
<svg class="a" style="left:572.6999999999999px;top:306.9px" width="22" height="22" viewBox="572.6999999999999 306.9 22 22"><path d="M586.05 309.45 A8.8 8.8 0 1 0 586.05 326.34999999999997 A10.3 10.3 0 0 1 586.05 309.45 Z" fill="#ffa02b"/></svg>
<svg class="a" style="left:674.8px;top:306.9px" width="22" height="22" viewBox="674.8 306.9 22 22"><path d="M688.15 309.45 A8.8 8.8 0 1 0 688.15 326.34999999999997 A10.3 10.3 0 0 1 688.15 309.45 Z" fill="#ffa02b"/></svg>
<div class="a" style="left:697.3px;top:309.0px;width:16.8px;height:16.8px;background:#f7f8fb;border-radius:50%"></div>
<div class="a" style="left:701.5999999999999px;top:315.79999999999995px;width:8.3px;height:3.2px;background:#ff4d63;"></div>
<div class="a" style="left:704.15px;top:312.9px;width:3.1px;height:9px;background:#ff4d63;"></div>
<svg class="a" style="left:1082.2px;top:306.9px" width="22" height="22" viewBox="1082.2 306.9 22 22"><path d="M1095.55 309.45 A8.8 8.8 0 1 0 1095.55 326.34999999999997 A10.3 10.3 0 0 1 1095.55 309.45 Z" fill="#ffa02b"/></svg>
<div class="a" style="left:134px;top:347px;width:59px;height:52px;background:#fff;"></div>
<div class="a" style="left:194px;top:347px;width:42px;height:52px;background:#fff;"></div>
<div class="a" style="left:237px;top:347px;width:325px;height:52px;background:#fff;"></div>
<div class="a" style="left:563px;top:347px;width:103px;height:52px;background:#fbb1b7;"></div>
<div class="a" style="left:664px;top:347px;width:2px;height:52px;background:rgba(245,245,247,0.62);"></div>
<div class="a" style="left:666px;top:347px;width:102px;height:52px;background:#fbb1b7;"></div>
<div class="a" style="left:766px;top:347px;width:2px;height:52px;background:rgba(245,245,247,0.62);"></div>
<div class="a" style="left:768px;top:347px;width:102px;height:52px;background:#aef2cb;"></div>
<div class="a" style="left:868px;top:347px;width:2px;height:52px;background:rgba(245,245,247,0.62);"></div>
<div class="a" style="left:870px;top:347px;width:101px;height:52px;background:#fbb1b7;"></div>
<div class="a" style="left:970px;top:347px;width:1px;height:52px;background:rgba(245,245,247,0.62);"></div>
<div class="a" style="left:971px;top:347px;width:102px;height:52px;background:#fff;"></div>
<div class="a" style="left:1072px;top:347px;width:1px;height:52px;background:rgba(245,245,247,0.62);"></div>
<div class="a" style="left:1073px;top:347px;width:102px;height:52px;background:#aef2cb;"></div>
<div class="a" style="left:1174px;top:347px;width:1px;height:52px;background:rgba(245,245,247,0.62);"></div>
<div class="a" style="left:1175px;top:347px;width:101px;height:52px;background:#aef2cb;"></div>
<div class="cb" style="left:152.3px;top:365px"></div>
<div class="t m2" style="left:199.5px;width:30px;text-align:center;top:367.44px;font-size:12px;color:#1f232b;font-weight:400;letter-spacing:0px;">2</div>
<div class="t m" style="left:245.6px;top:358.64px;font-size:12px;color:#1f232b;font-weight:400;letter-spacing:0px;">Семенов Константин Иванович,</div>
<div class="t " style="left:245.6px;top:377.77px;font-size:10.2px;color:#7f838b;font-weight:400;letter-spacing:0px;">мебельщик,&nbsp; Люкс,&nbsp;&nbsp; +7911-222-33-44</div>
<div class="a" style="left:877.7px;top:362.0px;width:16.8px;height:16.8px;background:#f7f8fb;border-radius:50%"></div>
<div class="a" style="left:882.0px;top:368.79999999999995px;width:8.3px;height:3.2px;background:#ff4d63;"></div>
<div class="a" style="left:884.5500000000001px;top:365.9px;width:3.1px;height:9px;background:#ff4d63;"></div>
<div class="a" style="left:134px;top:400px;width:59px;height:52px;background:#fff;"></div>
<div class="a" style="left:194px;top:400px;width:42px;height:52px;background:#fff;"></div>
<div class="a" style="left:237px;top:400px;width:325px;height:52px;background:#fff;"></div>
<div class="a" style="left:563px;top:400px;width:103px;height:52px;background:#aef2cb;"></div>
<div class="a" style="left:664px;top:400px;width:2px;height:52px;background:rgba(245,245,247,0.62);"></div>
<div class="a" style="left:666px;top:400px;width:102px;height:52px;background:#aef2cb;"></div>
<div class="a" style="left:766px;top:400px;width:2px;height:52px;background:rgba(245,245,247,0.62);"></div>
<div class="a" style="left:768px;top:400px;width:102px;height:52px;background:#aef2cb;"></div>
<div class="a" style="left:868px;top:400px;width:2px;height:52px;background:rgba(245,245,247,0.62);"></div>
<div class="a" style="left:870px;top:400px;width:101px;height:52px;background:#aef2cb;"></div>
<div class="a" style="left:970px;top:400px;width:1px;height:52px;background:rgba(245,245,247,0.62);"></div>
<div class="a" style="left:971px;top:400px;width:102px;height:52px;background:#aef2cb;"></div>
<div class="a" style="left:1072px;top:400px;width:1px;height:52px;background:rgba(245,245,247,0.62);"></div>
<div class="a" style="left:1073px;top:400px;width:102px;height:52px;background:#fbb1b7;"></div>
<div class="a" style="left:1174px;top:400px;width:1px;height:52px;background:rgba(245,245,247,0.62);"></div>
<div class="a" style="left:1175px;top:400px;width:101px;height:52px;background:#fbb1b7;"></div>
<div class="cb" style="left:152.3px;top:418px"></div>
<div class="t m2" style="left:199.5px;width:30px;text-align:center;top:420.44px;font-size:12px;color:#1f232b;font-weight:400;letter-spacing:0px;">3</div>
<div class="t m" style="left:245.6px;top:411.64px;font-size:12px;color:#1f232b;font-weight:400;letter-spacing:0px;">Коновалов Михаил Сергеевич,</div>
<div class="t " style="left:245.6px;top:430.77px;font-size:10.2px;color:#7f838b;font-weight:400;letter-spacing:0px;">водитель,&nbsp; Газель 5 т.,&nbsp;&nbsp; +7966-777-77-77</div>
<svg class="a" style="left:876.0px;top:413.4px" width="20" height="20" viewBox="876.0 413.4 20 20"><circle cx="886.0" cy="423.4" r="7.5" fill="#f7f8fb" stroke="#ff3f58" stroke-width="1.6"/><path d="M886.0 418.59999999999997 V423.7 H890.2" fill="none" stroke="#1d2440" stroke-width="2"/></svg>
<div class="a" style="left:134px;top:453px;width:59px;height:52px;background:#fff;"></div>
<div class="a" style="left:194px;top:453px;width:42px;height:52px;background:#fff;"></div>
<div class="a" style="left:237px;top:453px;width:325px;height:52px;background:#fff;"></div>
<div class="a" style="left:563px;top:453px;width:103px;height:52px;background:#aef2cb;"></div>
<div class="a" style="left:664px;top:453px;width:2px;height:52px;background:rgba(245,245,247,0.62);"></div>
<div class="a" style="left:666px;top:453px;width:102px;height:52px;background:#aef2cb;"></div>
<div class="a" style="left:766px;top:453px;width:2px;height:52px;background:rgba(245,245,247,0.62);"></div>
<div class="a" style="left:768px;top:453px;width:102px;height:52px;background:#fbb1b7;"></div>
<div class="a" style="left:868px;top:453px;width:2px;height:52px;background:rgba(245,245,247,0.62);"></div>
<div class="a" style="left:870px;top:453px;width:101px;height:52px;background:#fbb1b7;"></div>
<div class="a" style="left:970px;top:453px;width:1px;height:52px;background:rgba(245,245,247,0.62);"></div>
<div class="a" style="left:971px;top:453px;width:102px;height:52px;background:#aef2cb;"></div>
<div class="a" style="left:1072px;top:453px;width:1px;height:52px;background:rgba(245,245,247,0.62);"></div>
<div class="a" style="left:1073px;top:453px;width:102px;height:52px;background:#aef2cb;"></div>
<div class="a" style="left:1174px;top:453px;width:1px;height:52px;background:rgba(245,245,247,0.62);"></div>
<div class="a" style="left:1175px;top:453px;width:101px;height:52px;background:#fff;"></div>
<div class="cb" style="left:152.3px;top:471px"></div>
<div class="t m2" style="left:199.5px;width:30px;text-align:center;top:473.44px;font-size:12px;color:#1f232b;font-weight:400;letter-spacing:0px;">4</div>
<div class="t m" style="left:245.6px;top:464.64px;font-size:12px;color:#1f232b;font-weight:400;letter-spacing:0px;">Иванов Иван Петрович,</div>
<div class="t " style="left:245.6px;top:483.77px;font-size:10.2px;color:#7f838b;font-weight:400;letter-spacing:0px;">грузчик,&nbsp; Люкс,&nbsp;&nbsp; +7903-999-99-00</div>
<svg class="a" style="left:572.6999999999999px;top:465.9px" width="22" height="22" viewBox="572.6999999999999 465.9 22 22"><path d="M586.05 468.45 A8.8 8.8 0 1 0 586.05 485.34999999999997 A10.3 10.3 0 0 1 586.05 468.45 Z" fill="#ffa02b"/></svg>
<svg class="a" style="left:674.8px;top:465.9px" width="22" height="22" viewBox="674.8 465.9 22 22"><path d="M688.15 468.45 A8.8 8.8 0 1 0 688.15 485.34999999999997 A10.3 10.3 0 0 1 688.15 468.45 Z" fill="#ffa02b"/></svg>
<div class="a" style="left:697.3px;top:468.0px;width:16.8px;height:16.8px;background:#f7f8fb;border-radius:50%"></div>
<div class="a" style="left:701.5999999999999px;top:474.79999999999995px;width:8.3px;height:3.2px;background:#ff4d63;"></div>
<div class="a" style="left:704.15px;top:471.9px;width:3.1px;height:9px;background:#ff4d63;"></div>
<svg class="a" style="left:1082.2px;top:465.9px" width="22" height="22" viewBox="1082.2 465.9 22 22"><path d="M1095.55 468.45 A8.8 8.8 0 1 0 1095.55 485.34999999999997 A10.3 10.3 0 0 1 1095.55 468.45 Z" fill="#ffa02b"/></svg>
<svg class="a" style="left:1180px;top:468px" width="26" height="20" viewBox="1180 468 26 20">
<path d="M1183.2 485.4 V481.6 Q1183.2 477.5 1187.2 477.5 H1190.8 Q1193 477.5 1194.2 479.2 L1192.5 481.4 L1194.2 485.4 Z" fill="#fe6a35"/>
<circle cx="1189.8" cy="474.2" r="3.7" fill="#fe6a35" stroke="#fff" stroke-width="1"/>
<path d="M1195.7 478.4 L1201.4 484.1 M1201.4 478.4 L1195.7 484.1" stroke="#fe6a35" stroke-width="2.5" stroke-linecap="round"/>
</svg>
<div class="a" style="left:134px;top:506px;width:59px;height:52px;background:#fff;"></div>
<div class="a" style="left:194px;top:506px;width:42px;height:52px;background:#fff;"></div>
<div class="a" style="left:237px;top:506px;width:325px;height:52px;background:#fff;"></div>
<div class="a" style="left:563px;top:506px;width:103px;height:52px;background:#fbb1b7;"></div>
<div class="a" style="left:664px;top:506px;width:2px;height:52px;background:rgba(245,245,247,0.62);"></div>
<div class="a" style="left:666px;top:506px;width:102px;height:52px;background:#fbb1b7;"></div>
<div class="a" style="left:766px;top:506px;width:2px;height:52px;background:rgba(245,245,247,0.62);"></div>
<div class="a" style="left:768px;top:506px;width:102px;height:52px;background:#aef2cb;"></div>
<div class="a" style="left:868px;top:506px;width:2px;height:52px;background:rgba(245,245,247,0.62);"></div>
<div class="a" style="left:870px;top:506px;width:101px;height:52px;background:#fbb1b7;"></div>
<div class="a" style="left:970px;top:506px;width:1px;height:52px;background:rgba(245,245,247,0.62);"></div>
<div class="a" style="left:971px;top:506px;width:102px;height:52px;background:#fff;"></div>
<div class="a" style="left:1072px;top:506px;width:1px;height:52px;background:rgba(245,245,247,0.62);"></div>
<div class="a" style="left:1073px;top:506px;width:102px;height:52px;background:#aef2cb;"></div>
<div class="a" style="left:1174px;top:506px;width:1px;height:52px;background:rgba(245,245,247,0.62);"></div>
<div class="a" style="left:1175px;top:506px;width:101px;height:52px;background:#aef2cb;"></div>
<div class="cb" style="left:152.3px;top:524px"></div>
<div class="t m2" style="left:199.5px;width:30px;text-align:center;top:526.44px;font-size:12px;color:#1f232b;font-weight:400;letter-spacing:0px;">5</div>
<div class="t m" style="left:245.6px;top:517.64px;font-size:12px;color:#1f232b;font-weight:400;letter-spacing:0px;">Семенов Константин Иванович,</div>
<div class="t " style="left:245.6px;top:536.77px;font-size:10.2px;color:#7f838b;font-weight:400;letter-spacing:0px;">мебельщик,&nbsp; Люкс,&nbsp;&nbsp; +7911-222-33-44</div>
<div class="a" style="left:877.7px;top:521.0px;width:16.8px;height:16.8px;background:#f7f8fb;border-radius:50%"></div>
<div class="a" style="left:882.0px;top:527.8px;width:8.3px;height:3.2px;background:#ff4d63;"></div>
<div class="a" style="left:884.5500000000001px;top:524.9px;width:3.1px;height:9px;background:#ff4d63;"></div>
<div class="a" style="left:134px;top:559px;width:59px;height:52px;background:#fff;"></div>
<div class="a" style="left:194px;top:559px;width:42px;height:52px;background:#fff;"></div>
<div class="a" style="left:237px;top:559px;width:325px;height:52px;background:#fff;"></div>
<div class="a" style="left:563px;top:559px;width:103px;height:52px;background:#aef2cb;"></div>
<div class="a" style="left:664px;top:559px;width:2px;height:52px;background:rgba(245,245,247,0.62);"></div>
<div class="a" style="left:666px;top:559px;width:102px;height:52px;background:#aef2cb;"></div>
<div class="a" style="left:766px;top:559px;width:2px;height:52px;background:rgba(245,245,247,0.62);"></div>
<div class="a" style="left:768px;top:559px;width:102px;height:52px;background:#aef2cb;"></div>
<div class="a" style="left:868px;top:559px;width:2px;height:52px;background:rgba(245,245,247,0.62);"></div>
<div class="a" style="left:870px;top:559px;width:101px;height:52px;background:#aef2cb;"></div>
<div class="a" style="left:970px;top:559px;width:1px;height:52px;background:rgba(245,245,247,0.62);"></div>
<div class="a" style="left:971px;top:559px;width:102px;height:52px;background:#aef2cb;"></div>
<div class="a" style="left:1072px;top:559px;width:1px;height:52px;background:rgba(245,245,247,0.62);"></div>
<div class="a" style="left:1073px;top:559px;width:102px;height:52px;background:#fbb1b7;"></div>
<div class="a" style="left:1174px;top:559px;width:1px;height:52px;background:rgba(245,245,247,0.62);"></div>
<div class="a" style="left:1175px;top:559px;width:101px;height:52px;background:#fbb1b7;"></div>
<div class="cb" style="left:152.3px;top:577px"></div>
<div class="t m2" style="left:199.5px;width:30px;text-align:center;top:579.44px;font-size:12px;color:#1f232b;font-weight:400;letter-spacing:0px;">6</div>
<div class="t m" style="left:245.6px;top:570.64px;font-size:12px;color:#1f232b;font-weight:400;letter-spacing:0px;">Коновалов Михаил Сергеевич,</div>
<div class="t " style="left:245.6px;top:589.77px;font-size:10.2px;color:#7f838b;font-weight:400;letter-spacing:0px;">водитель,&nbsp; Газель 5 т.,&nbsp;&nbsp; +7966-777-77-77</div>
<svg class="a" style="left:876.0px;top:572.4px" width="20" height="20" viewBox="876.0 572.4 20 20"><circle cx="886.0" cy="582.4" r="7.5" fill="#f7f8fb" stroke="#ff3f58" stroke-width="1.6"/><path d="M886.0 577.6 V582.6999999999999 H890.2" fill="none" stroke="#1d2440" stroke-width="2"/></svg>
<div class="a" style="left:134px;top:612px;width:59px;height:52px;background:#fff;"></div>
<div class="a" style="left:194px;top:612px;width:42px;height:52px;background:#fff;"></div>
<div class="a" style="left:237px;top:612px;width:325px;height:52px;background:#fff;"></div>
<div class="a" style="left:563px;top:612px;width:103px;height:52px;background:#aef2cb;"></div>
<div class="a" style="left:664px;top:612px;width:2px;height:52px;background:rgba(245,245,247,0.62);"></div>
<div class="a" style="left:666px;top:612px;width:102px;height:52px;background:#aef2cb;"></div>
<div class="a" style="left:766px;top:612px;width:2px;height:52px;background:rgba(245,245,247,0.62);"></div>
<div class="a" style="left:768px;top:612px;width:102px;height:52px;background:#fbb1b7;"></div>
<div class="a" style="left:868px;top:612px;width:2px;height:52px;background:rgba(245,245,247,0.62);"></div>
<div class="a" style="left:870px;top:612px;width:101px;height:52px;background:#fbb1b7;"></div>
<div class="a" style="left:970px;top:612px;width:1px;height:52px;background:rgba(245,245,247,0.62);"></div>
<div class="a" style="left:971px;top:612px;width:102px;height:52px;background:#aef2cb;"></div>
<div class="a" style="left:1072px;top:612px;width:1px;height:52px;background:rgba(245,245,247,0.62);"></div>
<div class="a" style="left:1073px;top:612px;width:102px;height:52px;background:#aef2cb;"></div>
<div class="a" style="left:1174px;top:612px;width:1px;height:52px;background:rgba(245,245,247,0.62);"></div>
<div class="a" style="left:1175px;top:612px;width:101px;height:52px;background:#fff;"></div>
<div class="cb" style="left:152.3px;top:630px"></div>
<div class="t m2" style="left:199.5px;width:30px;text-align:center;top:632.44px;font-size:12px;color:#1f232b;font-weight:400;letter-spacing:0px;">7</div>
<div class="t m" style="left:245.6px;top:623.64px;font-size:12px;color:#1f232b;font-weight:400;letter-spacing:0px;">Иванов Иван Петрович,</div>
<div class="t " style="left:245.6px;top:642.77px;font-size:10.2px;color:#7f838b;font-weight:400;letter-spacing:0px;">грузчик,&nbsp; Люкс,&nbsp;&nbsp; +7903-999-99-00</div>
<svg class="a" style="left:572.6999999999999px;top:624.9px" width="22" height="22" viewBox="572.6999999999999 624.9 22 22"><path d="M586.05 627.4499999999999 A8.8 8.8 0 1 0 586.05 644.35 A10.3 10.3 0 0 1 586.05 627.4499999999999 Z" fill="#ffa02b"/></svg>
<svg class="a" style="left:674.8px;top:624.9px" width="22" height="22" viewBox="674.8 624.9 22 22"><path d="M688.15 627.4499999999999 A8.8 8.8 0 1 0 688.15 644.35 A10.3 10.3 0 0 1 688.15 627.4499999999999 Z" fill="#ffa02b"/></svg>
<div class="a" style="left:697.3px;top:627.0px;width:16.8px;height:16.8px;background:#f7f8fb;border-radius:50%"></div>
<div class="a" style="left:701.5999999999999px;top:633.8px;width:8.3px;height:3.2px;background:#ff4d63;"></div>
<div class="a" style="left:704.15px;top:630.9px;width:3.1px;height:9px;background:#ff4d63;"></div>
<svg class="a" style="left:1082.2px;top:624.9px" width="22" height="22" viewBox="1082.2 624.9 22 22"><path d="M1095.55 627.4499999999999 A8.8 8.8 0 1 0 1095.55 644.35 A10.3 10.3 0 0 1 1095.55 627.4499999999999 Z" fill="#ffa02b"/></svg>
<div class="a" style="left:134px;top:665px;width:59px;height:52px;background:#fff;"></div>
<div class="a" style="left:194px;top:665px;width:42px;height:52px;background:#fff;"></div>
<div class="a" style="left:237px;top:665px;width:325px;height:52px;background:#fff;"></div>
<div class="a" style="left:563px;top:665px;width:103px;height:52px;background:#fbb1b7;"></div>
<div class="a" style="left:664px;top:665px;width:2px;height:52px;background:rgba(245,245,247,0.62);"></div>
<div class="a" style="left:666px;top:665px;width:102px;height:52px;background:#fbb1b7;"></div>
<div class="a" style="left:766px;top:665px;width:2px;height:52px;background:rgba(245,245,247,0.62);"></div>
<div class="a" style="left:768px;top:665px;width:102px;height:52px;background:#aef2cb;"></div>
<div class="a" style="left:868px;top:665px;width:2px;height:52px;background:rgba(245,245,247,0.62);"></div>
<div class="a" style="left:870px;top:665px;width:101px;height:52px;background:#fbb1b7;"></div>
<div class="a" style="left:970px;top:665px;width:1px;height:52px;background:rgba(245,245,247,0.62);"></div>
<div class="a" style="left:971px;top:665px;width:102px;height:52px;background:#fff;"></div>
<div class="a" style="left:1072px;top:665px;width:1px;height:52px;background:rgba(245,245,247,0.62);"></div>
<div class="a" style="left:1073px;top:665px;width:102px;height:52px;background:#aef2cb;"></div>
<div class="a" style="left:1174px;top:665px;width:1px;height:52px;background:rgba(245,245,247,0.62);"></div>
<div class="a" style="left:1175px;top:665px;width:101px;height:52px;background:#aef2cb;"></div>
<div class="cb" style="left:152.3px;top:683px"></div>
<div class="t m2" style="left:199.5px;width:30px;text-align:center;top:685.44px;font-size:12px;color:#1f232b;font-weight:400;letter-spacing:0px;">8</div>
<div class="t m" style="left:245.6px;top:676.64px;font-size:12px;color:#1f232b;font-weight:400;letter-spacing:0px;">Семенов Константин Иванович,</div>
<div class="t " style="left:245.6px;top:695.77px;font-size:10.2px;color:#7f838b;font-weight:400;letter-spacing:0px;">мебельщик,&nbsp; Люкс,&nbsp;&nbsp; +7911-222-33-44</div>
<div class="a" style="left:877.7px;top:680.0px;width:16.8px;height:16.8px;background:#f7f8fb;border-radius:50%"></div>
<div class="a" style="left:882.0px;top:686.8px;width:8.3px;height:3.2px;background:#ff4d63;"></div>
<div class="a" style="left:884.5500000000001px;top:683.9px;width:3.1px;height:9px;background:#ff4d63;"></div>
<div class="a" style="left:134px;top:718px;width:59px;height:40px;background:#fff;"></div>
<div class="a" style="left:194px;top:718px;width:42px;height:40px;background:#fff;"></div>
<div class="a" style="left:237px;top:718px;width:325px;height:40px;background:#fff;"></div>
<div class="a" style="left:563px;top:718px;width:103px;height:40px;background:#aef2cb;"></div>
<div class="a" style="left:664px;top:718px;width:2px;height:40px;background:rgba(245,245,247,0.62);"></div>
<div class="a" style="left:666px;top:718px;width:102px;height:40px;background:#aef2cb;"></div>
<div class="a" style="left:766px;top:718px;width:2px;height:40px;background:rgba(245,245,247,0.62);"></div>
<div class="a" style="left:768px;top:718px;width:102px;height:40px;background:#aef2cb;"></div>
<div class="a" style="left:868px;top:718px;width:2px;height:40px;background:rgba(245,245,247,0.62);"></div>
<div class="a" style="left:870px;top:718px;width:101px;height:40px;background:#aef2cb;"></div>
<div class="a" style="left:970px;top:718px;width:1px;height:40px;background:rgba(245,245,247,0.62);"></div>
<div class="a" style="left:971px;top:718px;width:102px;height:40px;background:#aef2cb;"></div>
<div class="a" style="left:1072px;top:718px;width:1px;height:40px;background:rgba(245,245,247,0.62);"></div>
<div class="a" style="left:1073px;top:718px;width:102px;height:40px;background:#fbb1b7;"></div>
<div class="a" style="left:1174px;top:718px;width:1px;height:40px;background:rgba(245,245,247,0.62);"></div>
<div class="a" style="left:1175px;top:718px;width:101px;height:40px;background:#fbb1b7;"></div>
<div class="cb" style="left:152.3px;top:736px"></div>
<div class="t m2" style="left:199.5px;width:30px;text-align:center;top:738.44px;font-size:12px;color:#1f232b;font-weight:400;letter-spacing:0px;">9</div>
<div class="t m" style="left:245.6px;top:729.64px;font-size:12px;color:#1f232b;font-weight:400;letter-spacing:0px;">Коновалов Михаил Сергеевич,</div>
<div class="t " style="left:245.6px;top:748.77px;font-size:10.2px;color:#7f838b;font-weight:400;letter-spacing:0px;">водитель,&nbsp; Газель 5 т.,&nbsp;&nbsp; +7966-777-77-77</div>
<svg class="a" style="left:876.0px;top:731.4px" width="20" height="20" viewBox="876.0 731.4 20 20"><circle cx="886.0" cy="741.4" r="7.5" fill="#f7f8fb" stroke="#ff3f58" stroke-width="1.6"/><path d="M886.0 736.6 V741.6999999999999 H890.2" fill="none" stroke="#1d2440" stroke-width="2"/></svg>
<div class="a" style="left:131px;top:758px;width:1149px;height:2px;background:#f7f8fa;"></div>
<div class="a" style="left:1297.5px;top:143px;width:2.5px;height:601px;background:#d5d7db;"></div>
<svg class="a" style="left:986px;top:103.95px" width="22" height="22" viewBox="986 103.95 22 22"><path d="M999.4 106.60000000000001 A8.7 8.7 0 1 0 999.4 123.3 A9.7 9.7 0 0 1 999.4 106.60000000000001 Z" fill="#ffa02b"/></svg>
<div class="a" style="left:1109.1px;top:106.0px;width:16.8px;height:16.8px;background:#f7f8fb;border-radius:50%"></div>
<div class="a" style="left:1113.4px;top:112.80000000000001px;width:8.3px;height:3.2px;background:#ff4d63;"></div>
<div class="a" style="left:1115.95px;top:109.9px;width:3.1px;height:9px;background:#ff4d63;"></div>
<svg class="a" style="left:1185px;top:104px" width="22" height="22" viewBox="1185 104 22 22"><circle cx="1195.9" cy="114.5" r="7.4" fill="#f9fafc" stroke="#ff3f58" stroke-width="1.7"/><path d="M1196.3 109.8 V114.6 H1200.2" fill="none" stroke="#1d2440" stroke-width="1.9"/></svg>
<div class="a" style="left:0;top:0;width:1340px;height:784px;border:1px solid #cdcdcd;border-bottom:2px solid #cfd0d2"></div>
</body></html>
